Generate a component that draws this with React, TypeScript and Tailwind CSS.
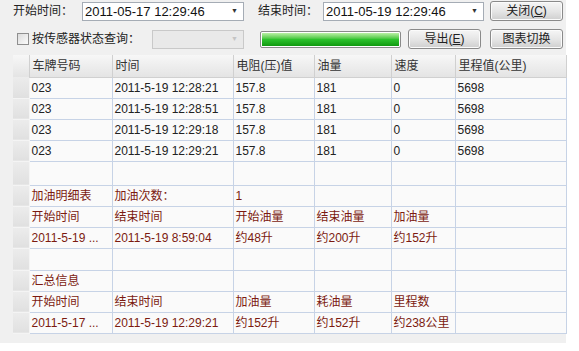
import React from 'react';

const cols = [16, 83, 121, 81, 77, 64, 111];

type Row = { cells: string[]; red?: boolean; h?: string };

const rows: Row[] = [
  { cells: ['023', '2011-5-19 12:28:21', '157.8', '181', '0', '5698'] },
  { cells: ['023', '2011-5-19 12:28:51', '157.8', '181', '0', '5698'] },
  { cells: ['023', '2011-5-19 12:29:18', '157.8', '181', '0', '5698'] },
  { cells: ['023', '2011-5-19 12:29:21', '157.8', '181', '0', '5698'] },
  { cells: ['', '', '', '', '', ''], h: 'h-[24px]' },
  { cells: ['加油明细表', '加油次数：', '1', '', '', ''], red: true },
  { cells: ['开始时间', '结束时间', '开始油量', '结束油量', '加油量', ''], red: true },
  { cells: ['2011-5-19 ...', '2011-5-19 8:59:04', '约48升', '约200升', '约152升', ''], red: true },
  { cells: ['', '', '', '', '', ''], h: 'h-[22px]' },
  { cells: ['汇总信息', '', '', '', '', ''], red: true },
  { cells: ['开始时间', '结束时间', '加油量', '耗油量', '里程数', ''], red: true },
  { cells: ['2011-5-17 ...', '2011-5-19 12:29:21', '约152升', '约152升', '约238公里', ''], red: true },
];

const headers = ['车牌号码', '时间', '电阻(压)值', '油量', '速度', '里程值(公里)'];

function Combo({ value, w, disabled }: { value: string; w: string; disabled?: boolean }) {
  return (
    <div
      className={`${w} h-[19px] flex items-center justify-between border ${
        disabled ? 'border-[#c9c9c9] bg-[#e9e9e9]' : 'border-[#a5acb5] bg-white'
      }`}
    >
      <span className="pl-[2px] text-[13px] leading-none text-[#111]">{value}</span>
      <span className={`pr-[5px] text-[7px] ${disabled ? 'text-[#c4c4c4]' : 'text-[#333]'}`}>▼</span>
    </div>
  );
}

function Btn({ children }: { children: React.ReactNode }) {
  return (
    <button className="w-[73px] h-[20px] flex items-center justify-center rounded-[3px] border border-[#8a8a8a] bg-gradient-to-b from-[#f6f6f6] via-[#e6e6e6] to-[#cfcfcf] text-[12px] text-[#222] shadow-[inset_0_0_0_1px_#fbfbfb]">
      {children}
    </button>
  );
}

export default function App() {
  return (
    <div className="w-[579px] h-[351px] bg-white font-['Liberation_Sans','Noto_Sans_CJK_SC',sans-serif] text-[12px] text-[#222]">
      <div className="w-[566px] h-[343px] bg-[#f0f0f0] flex flex-col">
        {/* toolbar row 1 */}
        <div className="flex items-center h-[20px] mt-[1px] pl-[13px]">
          <span className="w-[69px]">开始时间：</span>
          <Combo value="2011-05-17 12:29:46" w="w-[162px]" />
          <span className="w-[65px] ml-[14px]">结束时间：</span>
          <Combo value="2011-05-19 12:29:46" w="w-[161px]" />
          <div className="ml-[6px]">
            <Btn>
              关闭(<span className="underline">C</span>)
            </Btn>
          </div>
        </div>

        {/* toolbar row 2 */}
        <div className="flex items-center h-[20px] mt-[8px] pl-[17px]">
          <span className="w-[12px] h-[12px] border border-[#8f8f8f] bg-gradient-to-br from-[#dcdcdc] to-[#fbfbfb]" />
          <span className="ml-[3px] w-[120px]">按传感器状态查询：</span>
          <Combo value="" w="w-[92px]" disabled />
          <div className="ml-[16px] w-[141px] h-[17px] rounded-[2px] border border-[#8a8a8a] bg-white p-[1px]">
            <div className="w-full h-full bg-gradient-to-b from-[#b8f0a4] via-[#2cc22c] to-[#0f9a0f]" />
          </div>
          <div className="ml-[7px]">
            <Btn>
              导出(<span className="underline">E</span>)
            </Btn>
          </div>
          <div className="ml-[9px]">
            <Btn>图表切换</Btn>
          </div>
        </div>

        {/* grid */}
        <div className="mt-[6px] ml-[13px] w-[553px]">
          <table className="border-collapse table-fixed w-[553px]">
            <colgroup>
              {cols.map((c, i) => (
                <col key={i} style={{ width: c }} />
              ))}
            </colgroup>
            <thead>
              <tr className="h-[22px] bg-gradient-to-b from-[#f7f7f7] to-[#e4e4e4]">
                <th className="border-r border-[#d0d0d0]" />
                {headers.map((h) => (
                  <th
                    key={h}
                    className="border-r border-b border-[#d0d0d0] text-left font-normal pl-[3px] text-[#333] whitespace-nowrap overflow-hidden"
                  >
                    {h}
                  </th>
                ))}
              </tr>
            </thead>
            <tbody>
              {rows.map((r, i) => (
                <tr key={i} className={r.h ?? 'h-[21px]'}>
                  <td className="border-b border-r border-[#f4f4f4] bg-gradient-to-b from-[#ececec] to-[#e0e0e0]" />
                  {r.cells.map((c, j) => (
                    <td
                      key={j}
                      className={`border border-[#c7d3e6] bg-[#fafafa] pl-[2px] whitespace-nowrap overflow-hidden ${
                        r.red ? 'text-[#7c1a10]' : 'text-[#222]'
                      }`}
                    >
                      {c}
                    </td>
                  ))}
                </tr>
              ))}
            </tbody>
          </table>
        </div>
      </div>
    </div>
  );
}
